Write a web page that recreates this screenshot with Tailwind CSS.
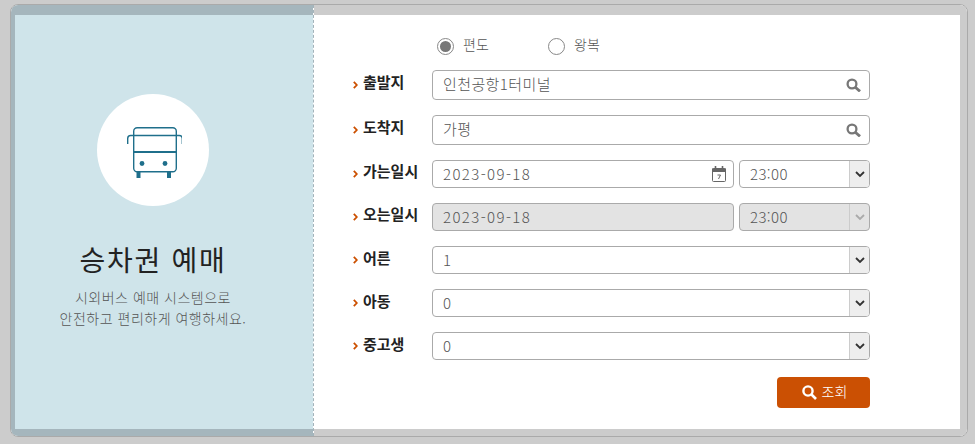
<!DOCTYPE html>
<html lang="ko">
<head>
  <meta charset="utf-8">
  <title>승차권 예매</title>
  <script src="https://cdn.jsdelivr.net/npm/@tailwindcss/browser@4"></script>
</head>
<body class="bg-[#cccccc] font-['Noto_Sans_CJK_KR','Noto_Sans',sans-serif]">
  <div class="ml-[10px] mt-[4px] flex h-[433px] w-[958px] overflow-hidden rounded-[8px] border border-[#aaaaaa] bg-white">

    <!-- left panel -->
    <div class="w-[303px] shrink-0 border-r border-dashed border-[#a3b3ba] bg-[#a5b6bd] bg-clip-padding pl-[4px] pt-[10px] pb-[7px]">
      <div class="flex h-full flex-col items-center bg-[#cfe4ea] pr-[22px] pt-[79px]">
        <div class="flex h-[112px] w-[112px] items-center justify-center rounded-full bg-white">
          <svg class="ml-[2px] mt-[4px]" width="56" height="52" viewBox="0 0 56 52" fill="none" stroke="#1f6f8b" stroke-width="1.4">
            <rect x="7.7" y="1.7" width="42.6" height="44" rx="3.5"/>
            <path d="M1.7 18v-5.5a3 3 0 0 1 3-3h48.6a3 3 0 0 1 3 3V18"/>
            <path d="M7.5 26h43" stroke-width="2.2"/>
            <circle cx="16" cy="37.5" r="2.4" fill="#1f6f8b" stroke="none"/>
            <circle cx="39" cy="37.5" r="2.4" fill="#1f6f8b" stroke="none"/>
            <path d="M10.5 46h4v6h-4zM41 46h4v6h-4z" fill="#1f6f8b" stroke="none"/>
          </svg>
        </div>
        <h2 class="mt-[33px] text-[28px] leading-[40px] font-normal tracking-[1.7px] text-[#222222]">승차권 예매</h2>
        <p class="mt-[8px] text-center text-[14px] leading-[21px] font-light tracking-[0.5px] text-[#555555]">시외버스 예매 시스템으로<br>안전하고 편리하게 여행하세요.</p>
      </div>
    </div>

    <!-- right panel -->
    <div class="flex-1 bg-[#cccccc] pt-[10px] pr-[7px] pb-[7px]">
      <div class="h-full bg-white pl-[39px] pr-[90px] pt-[22px] text-[15px] font-light text-[#555555]">

        <div class="mb-[15px] flex h-[18px] items-center pl-[84px] text-[14px]">
          <span class="flex w-[111px] items-center gap-[9px]">
            <span class="flex h-[17px] w-[17px] items-center justify-center rounded-full border border-[#888888]"><span class="h-[11px] w-[11px] rounded-full bg-[#777777]"></span></span>
            <span class="pb-[4px]">편도</span>
          </span>
          <span class="flex items-center gap-[9px]">
            <span class="h-[17px] w-[17px] rounded-full border border-[#888888]"></span>
            <span class="pb-[4px]">왕복</span>
          </span>
        </div>

        <div class="mb-[15px] flex h-[30px] items-center">
          <label class="flex w-[79px] items-center gap-[5px] font-bold text-[#222222]"><svg width="5" height="8" viewBox="0 0 5 8" fill="none" stroke="#cc5000" stroke-width="1.8"><path d="M.8 .8 3.8 4 .8 7.2"/></svg><span class="pb-[5px]">출발지</span></label>
          <div class="flex h-full flex-1 items-center rounded-[4px] border border-[#aaaaaa] pl-[10px] pr-[8px]">
            <input class="min-w-0 flex-1 pb-[2px] tracking-[0.4px] outline-none" value="인천공항1터미널">
            <svg width="15" height="14" viewBox="0 0 15 14" fill="none" stroke="#777777"><circle cx="6" cy="6" r="4.4" stroke-width="2.3"/><path d="M9 9l5 4.4" stroke-width="2.8"/></svg>
          </div>
        </div>

        <div class="mb-[15px] flex h-[30px] items-center">
          <label class="flex w-[79px] items-center gap-[5px] font-bold text-[#222222]"><svg width="5" height="8" viewBox="0 0 5 8" fill="none" stroke="#cc5000" stroke-width="1.8"><path d="M.8 .8 3.8 4 .8 7.2"/></svg><span class="pb-[5px]">도착지</span></label>
          <div class="flex h-full flex-1 items-center rounded-[4px] border border-[#aaaaaa] pl-[10px] pr-[8px]">
            <input class="min-w-0 flex-1 pb-[2px] tracking-[0.4px] outline-none" value="가평">
            <svg width="15" height="14" viewBox="0 0 15 14" fill="none" stroke="#777777"><circle cx="6" cy="6" r="4.4" stroke-width="2.3"/><path d="M9 9l5 4.4" stroke-width="2.8"/></svg>
          </div>
        </div>

        <div class="mb-[15px] flex h-[28px] items-center">
          <label class="flex w-[79px] items-center gap-[5px] font-bold text-[#222222]"><svg width="5" height="8" viewBox="0 0 5 8" fill="none" stroke="#cc5000" stroke-width="1.8"><path d="M.8 .8 3.8 4 .8 7.2"/></svg><span class="pb-[5px]">가는일시</span></label>
          <div class="flex h-full w-[302px] items-center rounded-[4px] border border-[#aaaaaa] pl-[10px] pr-[7px]">
            <input class="min-w-0 flex-1 tracking-[1.4px] outline-none" value="2023-09-18">
            <svg width="14" height="16" viewBox="0 0 14 16" fill="none" stroke="#666666"><rect x=".5" y="2.5" width="13" height="13" rx="1"/><path d="M0 2.5h14V6H0z" fill="#666666" stroke="none"/><path d="M3.5 0v3M10.5 0v3" stroke-width="1.6"/><path d="M5.5 9h3L6.5 13" stroke-width="1"/></svg>
          </div>
          <div class="ml-[5px] flex h-full flex-1 overflow-hidden rounded-[4px] border border-[#aaaaaa]">
            <select class="min-w-0 flex-1 appearance-none pl-[10px] tracking-[0.4px] outline-none"><option>23:00</option></select>
            <span class="flex w-[20px] items-center justify-center border-l border-[#cccccc] bg-[#eeeeee]"><svg width="10" height="7" viewBox="0 0 10 7" fill="none" stroke="#333333" stroke-width="1.8"><path d="M1 1l4 4 4-4"/></svg></span>
          </div>
        </div>

        <div class="mb-[15px] flex h-[28px] items-center">
          <label class="flex w-[79px] items-center gap-[5px] font-bold text-[#222222]"><svg width="5" height="8" viewBox="0 0 5 8" fill="none" stroke="#cc5000" stroke-width="1.8"><path d="M.8 .8 3.8 4 .8 7.2"/></svg><span class="pb-[5px]">오는일시</span></label>
          <div class="flex h-full w-[302px] items-center rounded-[4px] border border-[#aaaaaa] bg-[#e3e3e3] pl-[10px] pr-[7px]">
            <input class="min-w-0 flex-1 tracking-[1.4px] outline-none" value="2023-09-18" disabled>
          </div>
          <div class="ml-[5px] flex h-full flex-1 overflow-hidden rounded-[4px] border border-[#aaaaaa] bg-[#e3e3e3]">
            <select class="min-w-0 flex-1 appearance-none pl-[10px] tracking-[0.4px] outline-none" disabled><option>23:00</option></select>
            <span class="flex w-[20px] items-center justify-center border-l border-[#cccccc]"><svg width="10" height="7" viewBox="0 0 10 7" fill="none" stroke="#aaaaaa" stroke-width="1.8"><path d="M1 1l4 4 4-4"/></svg></span>
          </div>
        </div>

        <div class="mb-[15px] flex h-[28px] items-center">
          <label class="flex w-[79px] items-center gap-[5px] font-bold text-[#222222]"><svg width="5" height="8" viewBox="0 0 5 8" fill="none" stroke="#cc5000" stroke-width="1.8"><path d="M.8 .8 3.8 4 .8 7.2"/></svg><span class="pb-[4px]">어른</span></label>
          <div class="flex h-full flex-1 overflow-hidden rounded-[4px] border border-[#aaaaaa]">
            <select class="min-w-0 flex-1 appearance-none pl-[10px] outline-none"><option>1</option></select>
            <span class="flex w-[20px] items-center justify-center border-l border-[#cccccc] bg-[#eeeeee]"><svg width="10" height="7" viewBox="0 0 10 7" fill="none" stroke="#333333" stroke-width="1.8"><path d="M1 1l4 4 4-4"/></svg></span>
          </div>
        </div>

        <div class="mb-[15px] flex h-[28px] items-center">
          <label class="flex w-[79px] items-center gap-[5px] font-bold text-[#222222]"><svg width="5" height="8" viewBox="0 0 5 8" fill="none" stroke="#cc5000" stroke-width="1.8"><path d="M.8 .8 3.8 4 .8 7.2"/></svg><span class="pb-[4px]">아동</span></label>
          <div class="flex h-full flex-1 overflow-hidden rounded-[4px] border border-[#aaaaaa]">
            <select class="min-w-0 flex-1 appearance-none pl-[10px] outline-none"><option>0</option></select>
            <span class="flex w-[20px] items-center justify-center border-l border-[#cccccc] bg-[#eeeeee]"><svg width="10" height="7" viewBox="0 0 10 7" fill="none" stroke="#333333" stroke-width="1.8"><path d="M1 1l4 4 4-4"/></svg></span>
          </div>
        </div>

        <div class="mb-[17px] flex h-[28px] items-center">
          <label class="flex w-[79px] items-center gap-[5px] font-bold text-[#222222]"><svg width="5" height="8" viewBox="0 0 5 8" fill="none" stroke="#cc5000" stroke-width="1.8"><path d="M.8 .8 3.8 4 .8 7.2"/></svg><span class="pb-[4px]">중고생</span></label>
          <div class="flex h-full flex-1 overflow-hidden rounded-[4px] border border-[#aaaaaa]">
            <select class="min-w-0 flex-1 appearance-none pl-[10px] outline-none"><option>0</option></select>
            <span class="flex w-[20px] items-center justify-center border-l border-[#cccccc] bg-[#eeeeee]"><svg width="10" height="7" viewBox="0 0 10 7" fill="none" stroke="#333333" stroke-width="1.8"><path d="M1 1l4 4 4-4"/></svg></span>
          </div>
        </div>

        <div class="flex justify-end">
          <button class="flex h-[31px] w-[93px] items-center justify-center gap-[5px] rounded-[4px] bg-[#cb5003] pl-[2px] text-[14px] text-white">
            <svg width="15" height="15" viewBox="0 0 15 15" fill="none" stroke="#ffffff"><circle cx="6" cy="6" r="4.6" stroke-width="2.4"/><path d="M9.5 9.5l4.5 4.5" stroke-width="2.6"/></svg>
            <span class="pb-[3px]">조회</span>
          </button>
        </div>

      </div>
    </div>
  </div>
</body>
</html>
